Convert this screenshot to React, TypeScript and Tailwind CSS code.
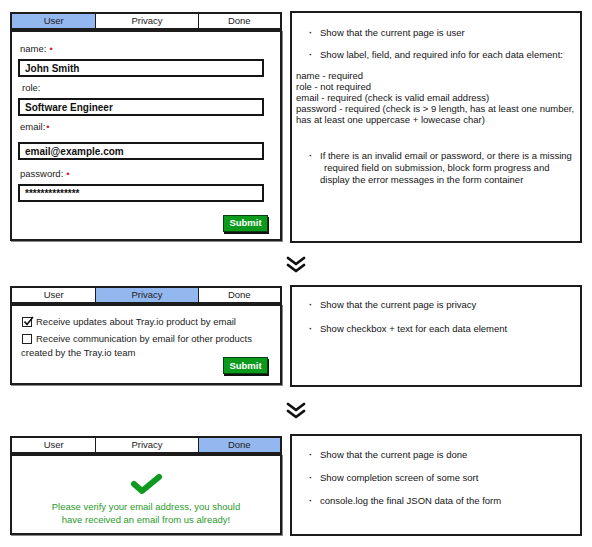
const font = { fontFamily: '"Liberation Sans", Arial, sans-serif' }

function Tabs({ active }: { active: number }) {
  const tabs = ['User', 'Privacy', 'Done']
  const widths = ['w-[84px]', 'w-[103px]', 'w-[83px]']
  return (
    <div className="flex h-[18px] border-2 border-[#1c1c1c] bg-white">
      {tabs.map((t, i) => (
        <div
          key={t}
          className={`${widths[i]} flex items-center justify-center text-[9.5px] text-[#222] ${i > 0 ? 'border-l border-[#1c1c1c]' : ''} ${i === active ? 'bg-[#93b7ef]' : ''}`}
        >
          {t}
        </div>
      ))}
    </div>
  )
}

function Req() {
  return <span className="text-[#d0202a] ml-[3px]">•</span>
}

function Field({ value }: { value: string }) {
  return (
    <div className="w-[246px] h-[18px] border-2 border-[#151515] flex items-center pl-[5px] text-[10px] font-bold text-[#111]">
      {value}
    </div>
  )
}

function Submit() {
  return (
    <div className="flex justify-end pr-[12px]">
      <div className="w-[45px] h-[17px] bg-[#0b9a1c] border border-[#0a4010] shadow-[1px_2px_0_#111] flex items-center justify-center text-[9.5px] font-bold text-white">
        Submit
      </div>
    </div>
  )
}

function Bullet({ children, className = '' }: { children: React.ReactNode; className?: string }) {
  return (
    <div className={`flex ${className}`}>
      <span className="w-[28px] pl-[17px] font-bold">·</span>
      <div>{children}</div>
    </div>
  )
}

function Notes({ children, className = '' }: { children: React.ReactNode; className?: string }) {
  return (
    <div className={`w-[292px] border-2 border-[#1c1c1c] bg-white text-[9.5px] leading-[11px] text-[#151515] ${className}`}>
      {children}
    </div>
  )
}

function Arrow({ className = '' }: { className?: string }) {
  return (
    <div className={`flex justify-center w-[572px] ${className}`}>
      <svg width="20" height="17" viewBox="0 0 20 17" fill="none" stroke="#111" strokeWidth="2.8" strokeLinecap="round" strokeLinejoin="round">
        <path d="M2 2 L10 8 L18 2" />
        <path d="M2 9 L10 15 L18 9" />
      </svg>
    </div>
  )
}

function Checkbox({ checked }: { checked?: boolean }) {
  return (
    <div className="w-[10px] h-[10px] border border-[#222] relative shrink-0">
      {checked && (
        <svg className="absolute -top-[2px] left-[0px]" width="11" height="11" viewBox="0 0 11 11" fill="none" stroke="#111" strokeWidth="1.6">
          <path d="M1.5 5.5 L4 8.5 L10 1" />
        </svg>
      )}
    </div>
  )
}

export default function App() {
  return (
    <div className="w-[592px] h-[547px] bg-white pl-[10px] pt-[11px]" style={font}>
      {/* User step */}
      <div className="flex gap-[8px] h-[232px]">
        <div className="w-[272px] pt-[1px]">
          <Tabs active={0} />
          <div className="h-[211px] border-2 border-[#1c1c1c] pl-[6px] shadow-[1px_1px_0_#888]">
            <div className="mt-[12px] pl-[2px] text-[9.5px] leading-[10px] text-[#222]">
              name:<Req />
            </div>
            <div className="mt-[5px]">
              <Field value="John Smith" />
            </div>
            <div className="mt-[6px] pl-[4px] text-[9.5px] leading-[10px] text-[#222]">role:</div>
            <div className="mt-[5px]">
              <Field value="Software Engineer" />
            </div>
            <div className="mt-[6px] pl-[2px] text-[9.5px] leading-[10px] text-[#222]">
              email:<span className="text-[#d0202a] ml-[1px]">•</span>
            </div>
            <div className="mt-[10px]">
              <Field value="email@example.com" />
            </div>
            <div className="mt-[9px] pl-[2px] text-[9.5px] leading-[10px] text-[#222]">
              password:<Req />
            </div>
            <div className="mt-[5px]">
              <Field value="**************" />
            </div>
            <div className="mt-[13px]">
              <Submit />
            </div>
          </div>
        </div>
        <Notes className="h-[232px] pt-[14px]">
          <Bullet>Show that the current page is user</Bullet>
          <Bullet className="mt-[11px]">Show label, field, and required info for each data element:</Bullet>
          <div className="mt-[10px] pl-[4px]">
            <div>name - required</div>
            <div>role - not required</div>
            <div>email - required (check is valid email address)</div>
            <div>password - required (check is &gt; 9 length, has at least one number,</div>
            <div>has at least one uppercase + lowecase char)</div>
          </div>
          <Bullet className="mt-[25px] leading-[12px]">
            <div>If there is an invalid email or password, or there is a missing</div>
            <div className="pl-[4px]">required field on submission, block form progress and</div>
            <div>display the error messages in the form container</div>
          </Bullet>
        </Notes>
      </div>

      <Arrow className="h-[42px] items-center" />

      {/* Privacy step */}
      <div className="flex gap-[8px] h-[102px]">
        <div className="w-[272px] pt-[1px]">
          <Tabs active={1} />
          <div className="h-[81px] border-2 border-[#1c1c1c] pl-[10px] pt-[11px] text-[9.5px] leading-[10px] text-[#222] shadow-[1px_1px_0_#888]">
            <div className="flex items-center gap-[4px]">
              <Checkbox checked />
              <span>Receive updates about Tray.io product by email</span>
            </div>
            <div className="mt-[7px] flex items-center gap-[4px]">
              <Checkbox />
              <span>Receive communication by email for other products</span>
            </div>
            <div className="mt-[4px] -ml-[1px]">created by the Tray.io team</div>
            <div className="mt-[-1px] -ml-[4px]">
              <Submit />
            </div>
          </div>
        </div>
        <Notes className="h-[102px] pt-[12px]">
          <Bullet>Show that the current page is privacy</Bullet>
          <Bullet className="mt-[13px]">Show checkbox + text for each data element</Bullet>
        </Notes>
      </div>

      <Arrow className="h-[47px] items-center" />

      {/* Done step */}
      <div className="flex gap-[8px] h-[102px]">
        <div className="w-[272px] pt-[2px]">
          <Tabs active={2} />
          <div className="h-[81px] border-2 border-[#1c1c1c] flex flex-col items-center pt-[17px] shadow-[1px_1px_0_#888]">
            <svg width="33" height="22" viewBox="0 0 33 22" fill="none" stroke="#0d9a1e" strokeWidth="6" strokeLinecap="round" strokeLinejoin="round">
              <path d="M4 11 L12 18 L29 4" />
            </svg>
            <div className="mt-[5px] text-center text-[9.5px] leading-[13px] text-[#2b9a2b]">
              <div>Please verify your email address, you should</div>
              <div>have received an email from us already!</div>
            </div>
          </div>
        </div>
        <Notes className="h-[102px] pt-[13px]">
          <Bullet>Show that the current page is done</Bullet>
          <Bullet className="mt-[12px]">Show completion screen of some sort</Bullet>
          <Bullet className="mt-[12px]">console.log the final JSON data of the form</Bullet>
        </Notes>
      </div>
    </div>
  )
}
